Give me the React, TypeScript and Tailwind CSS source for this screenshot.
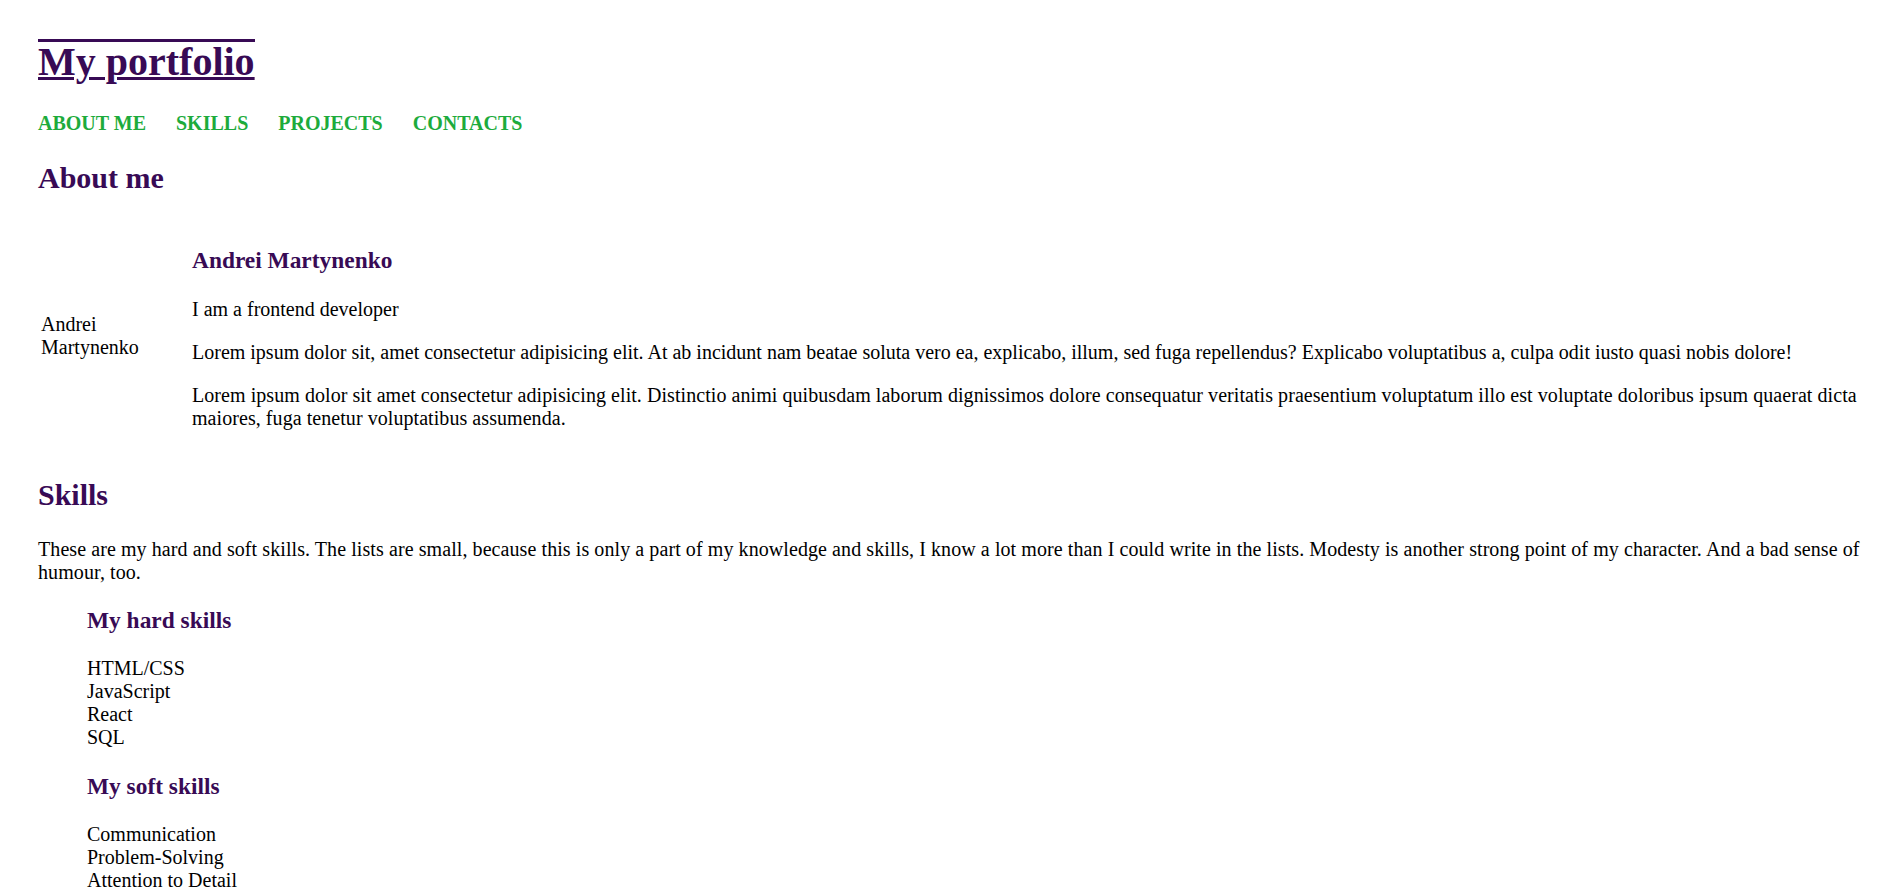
const hardSkills = ['HTML/CSS', 'JavaScript', 'React', 'SQL'];
const softSkills = ['Communication', 'Problem-Solving', 'Attention to Detail'];
const navLinks = ['About me', 'Skills', 'Projects', 'Contacts'];

const App = () => {
  return (
    <div className="min-h-screen bg-white pl-[38px] pr-[36px] pt-[39px] text-[20px] leading-[23px] text-black font-['Liberation_Serif','Times_New_Roman',serif]">
      <header>
        <h1 className="text-[40px] leading-[40px] font-bold text-[#380a55]">
          <span className="inline-block border-t-[3px] border-[#380a55] underline decoration-[3px]">My portfolio</span>
        </h1>

        <nav className="mt-[30px]">
          <ul className="flex gap-[30px]">
            {navLinks.map((link) => (
              <li key={link}>
                <a href="#" className="font-bold uppercase text-[#1dab3c]">
                  {link}
                </a>
              </li>
            ))}
          </ul>
        </nav>
      </header>

      <section className="mt-[26px]">
        <h2 className="text-[30px] leading-[34px] font-bold text-[#380a55]">About me</h2>

        <div className="flex items-center mt-[29px]">
          <div className="w-[154px] shrink-0 pl-[3px] pr-[30px] pt-[18px]">Andrei Martynenko</div>

          <div className="flex flex-col gap-[20px] pt-[23px]">
            <h3 className="text-[23.4px] leading-[27px] font-bold text-[#380a55] mb-[4px]">Andrei Martynenko</h3>
            <p>I am a frontend developer</p>
            <p>
              Lorem ipsum dolor sit, amet consectetur adipisicing elit. At ab incidunt nam beatae soluta vero ea, explicabo,
              illum, sed fuga repellendus? Explicabo voluptatibus a, culpa odit iusto quasi nobis dolore!
            </p>
            <p className="tracking-[0.06px]">
              Lorem ipsum dolor sit amet consectetur adipisicing elit. Distinctio animi quibusdam laborum dignissimos dolore
              consequatur veritatis praesentium voluptatum illo est voluptate doloribus ipsum quaerat dicta maiores, fuga tenetur
              voluptatibus assumenda.
            </p>
          </div>
        </div>
      </section>

      <section className="mt-[48px]">
        <h2 className="text-[30px] leading-[34px] font-bold text-[#380a55]">Skills</h2>
        <p className="mt-[26px] tracking-[0.08px]">
          These are my hard and soft skills. The lists are small, because this is only a part of my knowledge and skills, I know a
          lot more than I could write in the lists. Modesty is another strong point of my character. And a bad sense of humour,
          too.
        </p>

        <div className="pl-[49px]">
          <h3 className="mt-[23px] text-[23.4px] leading-[27px] font-bold text-[#380a55]">My hard skills</h3>
          <ul className="mt-[23px]">
            {hardSkills.map((skill) => (
              <li key={skill}>{skill}</li>
            ))}
          </ul>

          <h3 className="mt-[24px] text-[23.4px] leading-[27px] font-bold text-[#380a55]">My soft skills</h3>
          <ul className="mt-[23px] pb-[24px]">
            {softSkills.map((skill) => (
              <li key={skill}>{skill}</li>
            ))}
          </ul>
        </div>
      </section>
    </div>
  );
};

export default App;
